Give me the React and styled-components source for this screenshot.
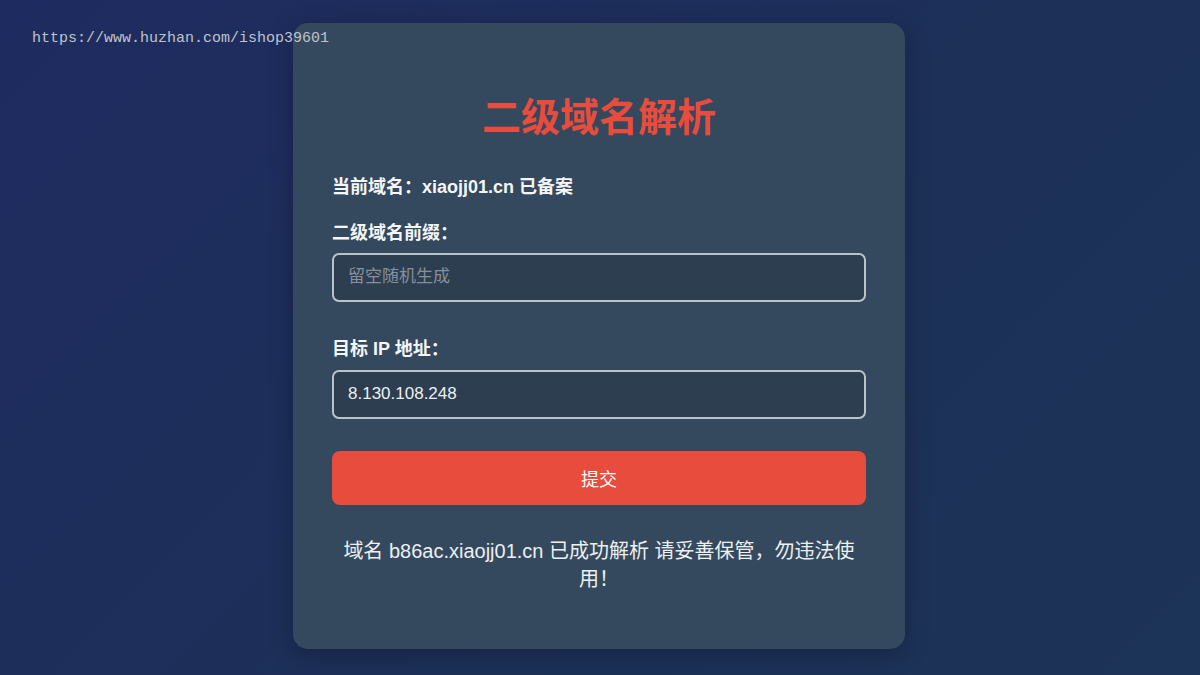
import React from 'react';
import styled, { createGlobalStyle } from 'styled-components';

const GlobalStyle = createGlobalStyle`
  html, body {
    margin: 0;
    padding: 0;
  }
  body {
    font-family: 'Liberation Sans', 'Noto Sans CJK SC', sans-serif;
    background: linear-gradient(135deg, #1e2b60 0%, #1d3058 55%, #1c3457 100%);
    min-height: 100vh;
  }
`;

const Page = styled.div`
  position: relative;
  height: 675px;
  box-sizing: border-box;
  padding: 0 2px 4px 0;
  display: flex;
  align-items: center;
  justify-content: center;
`;

const Watermark = styled.div`
  position: absolute;
  top: 30px;
  left: 32px;
  font-family: 'Liberation Mono', 'Noto Sans CJK SC', monospace;
  font-size: 15px;
  color: #c0c3ca;
`;

const Card = styled.div`
  width: 612px;
  box-sizing: border-box;
  padding: 40px 39px 56px;
  background: #34495e;
  border-radius: 15px;
  box-shadow: 0 6px 24px rgba(0, 0, 0, 0.25);
  display: flex;
  flex-direction: column;
`;

const Title = styled.h1`
  margin: 32px 0 0;
  font-size: 39px;
  line-height: 46px;
  font-weight: 700;
  color: #e74c3c;
  text-align: center;
`;

const Info = styled.div`
  margin-top: 34px;
  font-size: 18px;
  line-height: 24px;
  font-weight: 700;
  color: #f4f6f7;
`;

const Label = styled.label`
  margin-top: ${p => p.$gap}px;
  font-size: 18px;
  line-height: 24px;
  font-weight: 700;
  color: #f4f6f7;
`;

const Input = styled.input`
  margin-top: ${p => p.$gap}px;
  height: 49px;
  box-sizing: border-box;
  padding: 0 14px;
  border: 2px solid #bcc2c8;
  border-radius: 7px;
  background: #2c3e50;
  color: #ecf0f1;
  font-family: 'Liberation Sans', 'Noto Sans CJK SC', sans-serif;
  font-size: 17px;
  outline: none;
  &::placeholder {
    color: #87909a;
  }
`;

const Submit = styled.button`
  margin-top: 32px;
  height: 54px;
  border: none;
  border-radius: 8px;
  background: #e74c3c;
  color: #ffffff;
  font-family: 'Liberation Sans', 'Noto Sans CJK SC', sans-serif;
  font-size: 18px;
  cursor: pointer;
`;

const Result = styled.p`
  margin: 32px 0 0;
  font-size: 20px;
  line-height: 28px;
  color: #ecf0f1;
  text-align: center;
`;

export default function App() {
  return (
    <>
      <GlobalStyle />
      <Page>
        <Watermark>https://www.huzhan.com/ishop39601</Watermark>
        <Card>
          <Title>二级域名解析</Title>
          <Info>当前域名：xiaojj01.cn 已备案</Info>
          <Label $gap={22}>二级域名前缀：</Label>
          <Input $gap={8} placeholder="留空随机生成" />
          <Label $gap={35}>目标 IP 地址：</Label>
          <Input $gap={9} defaultValue="8.130.108.248" />
          <Submit>提交</Submit>
          <Result>域名 b86ac.xiaojj01.cn 已成功解析 请妥善保管，勿违法使用！</Result>
        </Card>
      </Page>
    </>
  );
}
